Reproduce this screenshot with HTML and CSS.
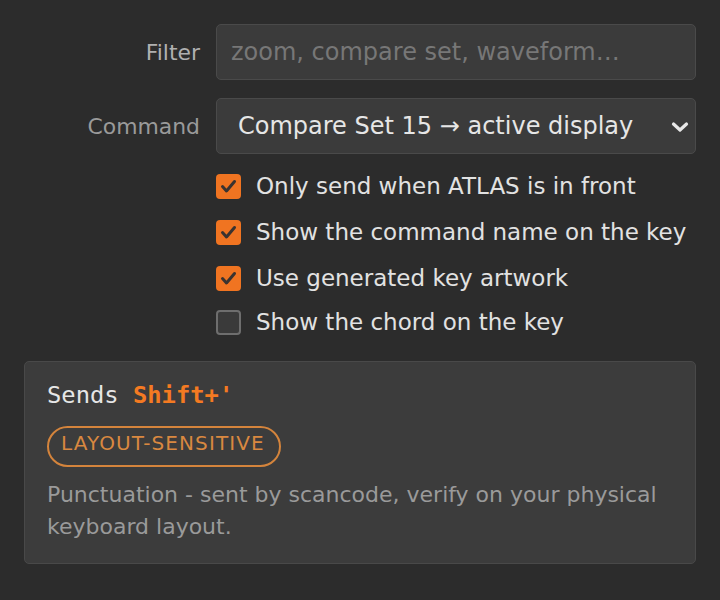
FILE: index.html
```html
<!DOCTYPE html>
<html lang="en">
<head>
<meta charset="utf-8">
<title>Key settings</title>
<link rel="stylesheet" href="styles.css">
</head>
<body>
<main class="panel">
  <div class="form">
    <label class="label label-filter" for="filter">Filter</label>
    <input id="filter" class="field" type="text" placeholder="zoom, compare set, waveform…">

    <label class="label label-command" for="command">Command</label>
    <div class="select-wrap">
      <select id="command" class="field select">
        <option>Compare Set 15 → active display</option>
      </select>
      <svg class="chevron" width="18" height="12" viewBox="0 0 18 12"><path d="M2.5 3 L9 9 L15.5 3" fill="none" stroke="#e8e8e8" stroke-width="3.2" stroke-linecap="round" stroke-linejoin="round"/></svg>
    </div>

    <div class="spacer"></div>
    <div class="options">
      <div class="option"><span class="box on"><svg width="25" height="25" viewBox="0 0 25 25"><path d="M6.5 12.5 L10.5 17 L18.5 7.5" fill="none" stroke="#3a3330" stroke-width="3" stroke-linecap="round" stroke-linejoin="round"/></svg></span><span>Only send when ATLAS is in front</span></div>
      <div class="option"><span class="box on"><svg width="25" height="25" viewBox="0 0 25 25"><path d="M6.5 12.5 L10.5 17 L18.5 7.5" fill="none" stroke="#3a3330" stroke-width="3" stroke-linecap="round" stroke-linejoin="round"/></svg></span><span>Show the command name on the key</span></div>
      <div class="option"><span class="box on"><svg width="25" height="25" viewBox="0 0 25 25"><path d="M6.5 12.5 L10.5 17 L18.5 7.5" fill="none" stroke="#3a3330" stroke-width="3" stroke-linecap="round" stroke-linejoin="round"/></svg></span><span>Use generated key artwork</span></div>
      <div class="option"><span class="box"></span><span>Show the chord on the key</span></div>
    </div>
  </div>

  <section class="card">
    <div class="sends">Sends <strong class="chord">Shift+'</strong></div>
    <span class="pill">LAYOUT-SENSITIVE</span>
    <p class="desc">Punctuation - sent by scancode, verify on your physical keyboard layout.</p>
  </section>
</main>
</body>
</html>
```

FILE: styles.css
```css
* { box-sizing: border-box; }

html, body {
  margin: 0;
  background: #2c2c2c;
}

body {
  font-family: "DejaVu Sans", "Liberation Sans", sans-serif;
  color: #e2e2e2;
}

.panel {
  padding: 24px 24px 0 24px;
}

.form {
  display: grid;
  grid-template-columns: 176px 1fr;
  column-gap: 16px;
  row-gap: 18px;
  align-items: center;
}

.label {
  text-align: right;
  font-size: 21.9px;
  color: #a3a3a3;
}

.label-filter { color: #b0b0b0; }
.label-command { color: #9a9a9a; }

.field {
  display: block;
  width: 100%;
  height: 56px;
  margin: 0;
  background: #3b3b3b;
  border: 1.5px solid #4a4a4a;
  border-radius: 5px;
  font-family: "DejaVu Sans", sans-serif;
  font-size: 24px;
  color: #e6e6e6;
  padding: 0 14px;
  outline: none;
}

.field::placeholder {
  color: #777777;
}

.select-wrap {
  display: grid;
  align-items: center;
}

.select-wrap > * {
  grid-area: 1 / 1;
}

.select {
  appearance: none;
  -webkit-appearance: none;
  padding: 0 40px 0 21px;
}

.chevron {
  justify-self: end;
  margin-right: 7px;
  margin-top: 2px;
  pointer-events: none;
}

.spacer { height: 1px; }

.options {
  display: flex;
  flex-direction: column;
  gap: 18px;
}

.option {
  display: flex;
  align-items: center;
  gap: 15px;
  height: 28px;
  font-size: 23px;
  color: #e2e2e2;
}

.option:last-child {
  margin-top: -2px;
}

.box {
  flex: none;
  width: 25px;
  height: 25px;
  border-radius: 4px;
  background: #3a3a3a;
  border: 2px solid #6e6e6e;
  display: flex;
}

.box.on {
  background: #f07421;
  border: none;
}

.card {
  margin-top: 25px;
  background: #3c3c3c;
  border: 1.5px solid #494949;
  border-radius: 5px;
  padding: 18px 22px 20px 22px;
}

.sends {
  font-family: "DejaVu Sans Mono", monospace;
  font-size: 23.8px;
  line-height: 30px;
  color: #e6e6e6;
}

.chord {
  color: #f47a22;
  font-weight: bold;
}

.pill {
  display: inline-block;
  vertical-align: top;
  margin-top: 16px;
  height: 41px;
  line-height: 30px;
  padding: 0 14px 0 12px;
  border: 2px solid #d4843c;
  border-radius: 21px;
  font-size: 20px;
  letter-spacing: 1.1px;
  color: #d98840;
}

.desc {
  margin: 12px 0 0 0;
  font-size: 22px;
  line-height: 32px;
  color: #9a9a9a;
}
```
